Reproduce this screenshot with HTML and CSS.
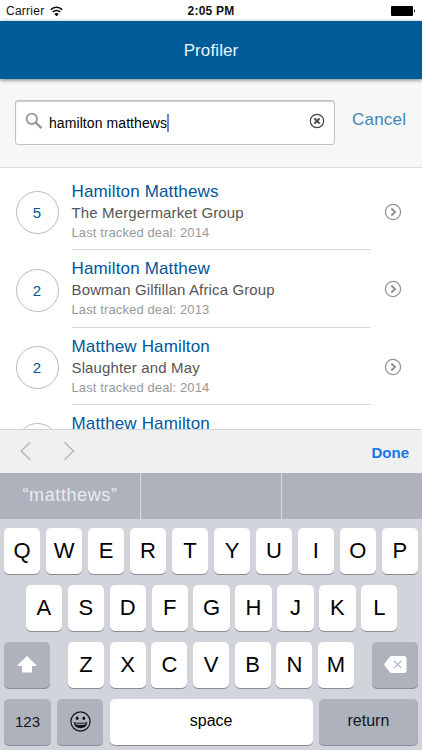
FILE: index.html
```html
<!DOCTYPE html>
<html lang="en">
<head>
<meta charset="utf-8">
<title>Profiler</title>
<link rel="stylesheet" href="styles.css">
</head>
<body>
<div class="status">
  <div class="carrier">Carrier
    <svg width="13" height="11" viewBox="0 0 13 11" fill="none" stroke="#000" stroke-width="1.6"><path d="M.8 3.7a8 8 0 0 1 11.4 0M2.8 6a5.2 5.2 0 0 1 7.4 0"/><path d="M6.5 10.2 4.4 8a3 3 0 0 1 4.2 0z" fill="#000" stroke="none"/></svg>
  </div>
  <div class="time">2:05 PM</div>
  <div class="power"><svg width="25" height="10" viewBox="0 0 25 10"><rect width="22" height="10" rx="1" /><path d="M23 3.3q2 1.7 0 3.4z"/></svg></div>
</div>
<header class="header">Profiler</header>
<div class="search">
  <div class="field">
    <svg class="lens" width="18" height="18" viewBox="0 0 18 18" fill="none" stroke="#999"><circle cx="6.8" cy="6.8" r="5.2" stroke-width="1.9"/><path d="m10.7 10.7 5.8 5.4" stroke-width="2.5"/></svg>
    <span class="query">hamilton matthews</span><i class="caret"></i>
    <svg class="clear" width="16" height="16" viewBox="0 0 16 16" fill="none" stroke="#444"><circle cx="8" cy="8" r="6.7" stroke-width="1.2"/><path d="m5.4 5.4 5.2 5.2m0-5.2-5.2 5.2" stroke-width="2"/></svg>
  </div>
  <span class="cancel">Cancel</span>
</div>
<main class="list">
  <div class="row"><div class="count">5</div><div class="info"><div class="name">Hamilton Matthews</div><div class="firm">The Mergermarket Group</div><div class="deal">Last tracked deal: 2014</div></div>
    <svg class="go" width="18" height="18" viewBox="0 0 18 18" fill="none" stroke="#929292"><circle cx="9" cy="9" r="7.6" stroke-width="1.25"/><path d="m7.300 5.500 3.700 3.500-3.700 3.500" stroke-width="2"/></svg></div>
  <div class="row"><div class="count">2</div><div class="info"><div class="name">Hamilton Matthew</div><div class="firm">Bowman Gilfillan Africa Group</div><div class="deal">Last tracked deal: 2013</div></div>
    <svg class="go" width="18" height="18" viewBox="0 0 18 18" fill="none" stroke="#929292"><circle cx="9" cy="9" r="7.6" stroke-width="1.25"/><path d="m7.300 5.500 3.700 3.500-3.700 3.500" stroke-width="2"/></svg></div>
  <div class="row"><div class="count">2</div><div class="info"><div class="name">Matthew Hamilton</div><div class="firm">Slaughter and May</div><div class="deal">Last tracked deal: 2014</div></div>
    <svg class="go" width="18" height="18" viewBox="0 0 18 18" fill="none" stroke="#929292"><circle cx="9" cy="9" r="7.6" stroke-width="1.25"/><path d="m7.300 5.500 3.700 3.500-3.700 3.500" stroke-width="2"/></svg></div>
  <div class="row"><div class="count"></div><div class="info"><div class="name">Matthew Hamilton</div></div></div>
</main>
<div class="toolbar">
  <svg width="56" height="20" viewBox="0 0 56 20" fill="none" stroke="#b7b8ba" stroke-width="1.5"><path d="M10.2 1.300 1.200 10l9 8.700M44.500 1.300l9 8.700-9 8.700"/></svg>
  <span class="done">Done</span>
</div>
<div class="suggest"><div>“matthews”</div><div></div><div></div></div>
<div class="keyboard">
  <div class="keys"><b>Q</b><b>W</b><b>E</b><b>R</b><b>T</b><b>Y</b><b>U</b><b>I</b><b>O</b><b>P</b></div>
  <div class="keys middle"><b>A</b><b>S</b><b>D</b><b>F</b><b>G</b><b>H</b><b>J</b><b>K</b><b>L</b></div>
  <div class="keys third">
    <b class="dark"><svg width="20" height="17" viewBox="0 0 20 17" fill="#fff"><path d="M10 0 19.600 9.300q.3.700-.5.700H15v5.200q0 1.300-1.300 1.300H6.300Q5 16.500 5 15.200V10H.9q-.8 0-.5-.7z"/></svg></b>
    <div class="letters"><b>Z</b><b>X</b><b>C</b><b>V</b><b>B</b><b>N</b><b>M</b></div>
    <b class="dark"><svg width="23" height="17" viewBox="0 0 23 17"><path d="M7.500 0H20q2.500 0 2.500 2.500v12Q22.500 17 20 17H7.500Q6.500 17 5.700 16L.6 9.500Q0 8.500.6 7.500L5.700 1Q6.500 0 7.500 0z" fill="#fff"/><path d="m10 4.800 7.400 7.400m0-7.400L10 12.200" stroke="#adb2bd" stroke-width="1.200"/></svg></b>
  </div>
  <div class="keys bottom">
    <b class="dark num">123</b>
    <b class="dark"><svg width="21" height="21" viewBox="0 0 21 21"><circle cx="10.500" cy="10.500" r="9.600" fill="none" stroke="#111722" stroke-width="1.200"/><ellipse cx="7.200" cy="7.300" rx="1.300" ry="1.800"/><ellipse cx="13.800" cy="7.300" rx="1.300" ry="1.800"/><path d="M3.600 11q6.900 1.700 13.800 0-.9 6.200-6.900 6.200T3.600 11z" fill="#111722"/><path d="M5.200 12.300q5.300 1.100 10.600 0l-.5 1q-4.800 1-9.600 0z" fill="#c5cad2"/></svg></b>
    <b class="space">space</b>
    <b class="dark">return</b>
  </div>
</div>
</body>
</html>
```
FILE: styles.css
```css
* { box-sizing: border-box; }
body {
  margin: 0;
  width: 422px;
  height: 750px;
  overflow: hidden;
  display: flex;
  flex-direction: column;
  background: #fff;
  font-family: "Liberation Sans", Arial, sans-serif;
  white-space: nowrap;
}
body > * { flex: none; }
svg { display: block; flex: none; }
.status {
  height: 21px;
  padding: 1px 6px 0;
  display: grid;
  grid-template-columns: 1fr auto 1fr;
  align-items: center;
  font-size: 12px;
  color: #111;
}
.carrier { display: flex; align-items: center; gap: 6px; letter-spacing: .25px; }
.time { font-weight: bold; letter-spacing: .2px; }
.power { justify-self: end; }
.header {
  height: 58px;
  background: #005b99;
  color: #eef6fc;
  font-size: 17px;
  line-height: 59px;
  text-align: center;
  letter-spacing: .1px;
  box-shadow: 0 1px 4px rgba(0, 0, 0, .5);
  z-index: 1;
}
.search {
  height: 89px;
  padding: 21px 15px 0;
  display: flex;
  background: #f7f7f7;
  border-bottom: 1px solid #dedede;
}
.field {
  width: 320px;
  height: 45px;
  display: flex;
  align-items: center;
  padding: 0 9px;
  border: 1px solid #c2c2c2;
  border-radius: 3px;
  background: #fff;
  box-shadow: inset 0 1px 1px #ccc;
}
.lens { margin: -4px 6px 0 0; }
.query { font-size: 14px; letter-spacing: .08px; color: #000; }
.caret { width: 2px; height: 18px; background: #6b87e0; }
.clear { margin: -4px 0 0 auto; }
.cancel { margin: 10px 0 0 17px; font-size: 17px; line-height: 20px; letter-spacing: .2px; color: #3e86b5; }
.list { height: 261px; padding-top: 5px; overflow: hidden; }
.row { height: 77.4px; display: flex; align-items: flex-start; padding-left: 15.5px; }
.count {
  width: 43px;
  height: 43px;
  margin: 18.2px 13px 0 0;
  border: 1px solid #b9b9b9;
  border-radius: 50%;
  font-size: 15px;
  line-height: 41px;
  text-align: center;
  color: #00549a;
}
.info { width: 299px; height: 77.4px; padding-top: 7px; border-bottom: 1px solid #dadada; }
.name { font-size: 17px; line-height: 23px; letter-spacing: .15px; color: #00569a; }
.firm { font-size: 15px; line-height: 20px; letter-spacing: .14px; color: #565656; }
.deal { font-size: 13px; line-height: 20px; letter-spacing: .12px; color: #999; }
.go { margin: 30px 0 0 13px; }
.toolbar {
  height: 44px;
  padding: 0 13px 0 20px;
  display: flex;
  align-items: center;
  justify-content: space-between;
  background: #eff0f2;
  border-top: 1px solid #d2d3d5;
}
.toolbar svg { margin-top: -1px; }
.done { padding-top: 1px; font-size: 15px; font-weight: bold; color: #1977e8; }
.suggest {
  height: 46px;
  display: grid;
  grid-template-columns: 141px 141px 140px;
  background: #adb2bd;
}
.suggest div {
  border-right: 1px solid #d7dae0;
  color: #e8ebef;
  font-size: 18px;
  line-height: 44px;
  letter-spacing: .6px;
  text-align: center;
}
.suggest div:last-child { border: 0; }
.keyboard {
  height: 231px;
  padding: 8.5px 4px 0;
  display: flex;
  flex-direction: column;
  gap: 11px;
  background: #d1d4db;
}
.keys { height: 46px; display: grid; grid-template-columns: repeat(10, 1fr); gap: 5.7px; }
.middle { grid-template-columns: repeat(9, 1fr); padding: 0 20.5px 0 21.700px; }
.third { grid-template-columns: 46px 1fr 46px; gap: 18px; }
.letters { display: grid; grid-template-columns: repeat(7, 1fr); gap: 5.7px; }
.bottom { grid-template-columns: 47px 46px 203px 99px; gap: 6.3px; }
b {
  display: flex;
  align-items: center;
  justify-content: center;
  background: #fff;
  border-radius: 5px;
  box-shadow: 0 1px 0 #898c92;
  font-size: 22px;
  font-weight: normal;
  color: #000;
}
.dark { background: #adb2bd; font-size: 16px; color: #10151e; }
.num { font-size: 15px; }
.space { font-size: 16px; }
.space, .bottom .dark:last-child { padding-bottom: 2px; }
```
